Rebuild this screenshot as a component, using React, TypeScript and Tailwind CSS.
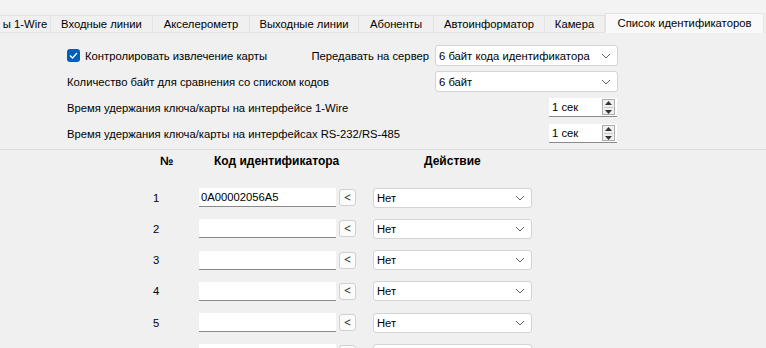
import { useState } from "react";

const tabs = [
  { label: "ы 1-Wire", w: 51 },
  { label: "Входные линии", w: 102 },
  { label: "Акселерометр", w: 97 },
  { label: "Выходные линии", w: 109 },
  { label: "Абоненты", w: 75 },
  { label: "Автоинформатор", w: 111 },
  { label: "Камера", w: 60 },
];

const rows = [
  { n: 1, code: "0A00002056A5" },
  { n: 2, code: "" },
  { n: 3, code: "" },
  { n: 4, code: "" },
  { n: 5, code: "" },
  { n: 6, code: "" },
];

function Chevron() {
  return (
    <svg width="10" height="6" viewBox="0 0 10 6" className="shrink-0">
      <polyline points="1,1 5,5 9,1" fill="none" stroke="#606060" strokeWidth="1" />
    </svg>
  );
}

function Combo({ value, className }: { value: string; className: string }) {
  return (
    <div className={"flex items-center justify-between bg-white border border-[#d4d4d4] rounded-[3px] pl-[3px] pr-[6px] " + className}>
      <span className="truncate">{value}</span>
      <Chevron />
    </div>
  );
}

function Spin({ value }: { value: string }) {
  return (
    <div className="w-[68px] h-[19px] flex items-center justify-between bg-white border-b border-[#8a8a8a] pl-[3px] pr-[2px]">
      <span>{value}</span>
      <div className="w-[13px] h-[16px] border border-[#adadad] bg-[#f0f0f0] flex flex-col items-center justify-center gap-[2px]">
        <svg width="7" height="4" viewBox="0 0 7 4">
          <polygon points="0,4 3.5,0 7,4" fill="#333" />
        </svg>
        <div className="w-[9px] h-px bg-[#c8c8c8]" />
        <svg width="7" height="4" viewBox="0 0 7 4">
          <polygon points="0,0 3.5,4 7,0" fill="#333" />
        </svg>
      </div>
    </div>
  );
}

export default function App() {
  const [checked, setChecked] = useState(true);

  return (
    <div className="w-[766px] h-[348px] overflow-hidden bg-[#f0f0f0] text-[11.25px] leading-[16px] text-black font-['Liberation_Sans','Noto_Sans',sans-serif]">
      {/* tab strip */}
      <div className="h-[13px] bg-[#f3f3f3]" />
      <div className="flex h-[20px] border-b border-[#e3e3e3]">
        {tabs.map(t => (
          <div
            key={t.label}
            style={{ width: t.w }}
            className="shrink-0 flex items-center justify-center border-r border-t border-[#e3e3e3] mt-[2px] whitespace-nowrap"
          >
            {t.label}
          </div>
        ))}
        <div className="shrink-0 w-[159px] flex items-center justify-center bg-[#f9f9f9] border border-[#e3e3e3] border-b-[#f9f9f9] -mb-px whitespace-nowrap">
          Список идентификаторов
        </div>
      </div>

      {/* settings */}
      <div className="pl-[67px] pt-[12px] flex flex-col gap-[5px]">
        <div className="flex items-center h-[21px]">
          <div className="w-[362px] flex items-center justify-between">
            <label className="flex items-center gap-[5px] cursor-pointer" onClick={() => setChecked(!checked)}>
              <span className="w-[13px] h-[13px] rounded-[3px] bg-[#005fb8] flex items-center justify-center">
                {checked && (
                  <svg width="9" height="7" viewBox="0 0 9 7">
                    <polyline points="1,3.5 3.5,6 8,1" fill="none" stroke="#fff" strokeWidth="1.3" />
                  </svg>
                )}
              </span>
              <span>Контролировать извлечение карты</span>
            </label>
            <span>Передавать на сервер</span>
          </div>
          <Combo value="6 байт кода идентификатора" className="ml-[6px] w-[183px] h-[21px]" />
        </div>
        <div className="flex items-center h-[21px]">
          <div className="w-[362px]">Количество байт для сравнения со списком кодов</div>
          <Combo value="6 байт" className="ml-[6px] w-[183px] h-[21px]" />
        </div>
        <div className="flex items-center h-[21px]">
          <div className="w-[482px]">Время удержания ключа/карты на интерфейсе 1-Wire</div>
          <Spin value="1 сек" />
        </div>
        <div className="flex items-center h-[21px]">
          <div className="w-[482px]">Время удержания ключа/карты на интерфейсах RS-232/RS-485</div>
          <Spin value="1 сек" />
        </div>
      </div>

      <div className="mt-[5px] border-t border-[#dcdcdc]" />

      {/* table */}
      <div className="pt-[3px] flex font-bold text-[12px] h-[16px]">
        <span className="ml-[160px] w-[54px]">№</span>
        <span className="w-[210px]">Код идентификатора</span>
        <span>Действие</span>
      </div>
      <div className="mt-[22px] flex flex-col gap-[12.3px]">
        {rows.map(r => (
          <div key={r.n} className="flex items-center h-[19px] pl-[153px]">
            <span className="w-[46px]">{r.n}</span>
            <div className="w-[137px] h-[19px] bg-white border-b border-[#8a8a8a] pl-[2px] flex items-center">
              {r.code}
            </div>
            <button className="ml-[3px] w-[17px] h-[17px] bg-[#fbfbfb] border border-[#d0d0d0] rounded-[3px] flex items-center justify-center text-[12px] leading-none font-['Noto_Sans',sans-serif] text-[#222]">
              &lt;
            </button>
            <Combo value="Нет" className="ml-[17px] w-[159px] h-[20px]" />
          </div>
        ))}
      </div>
    </div>
  );
}
